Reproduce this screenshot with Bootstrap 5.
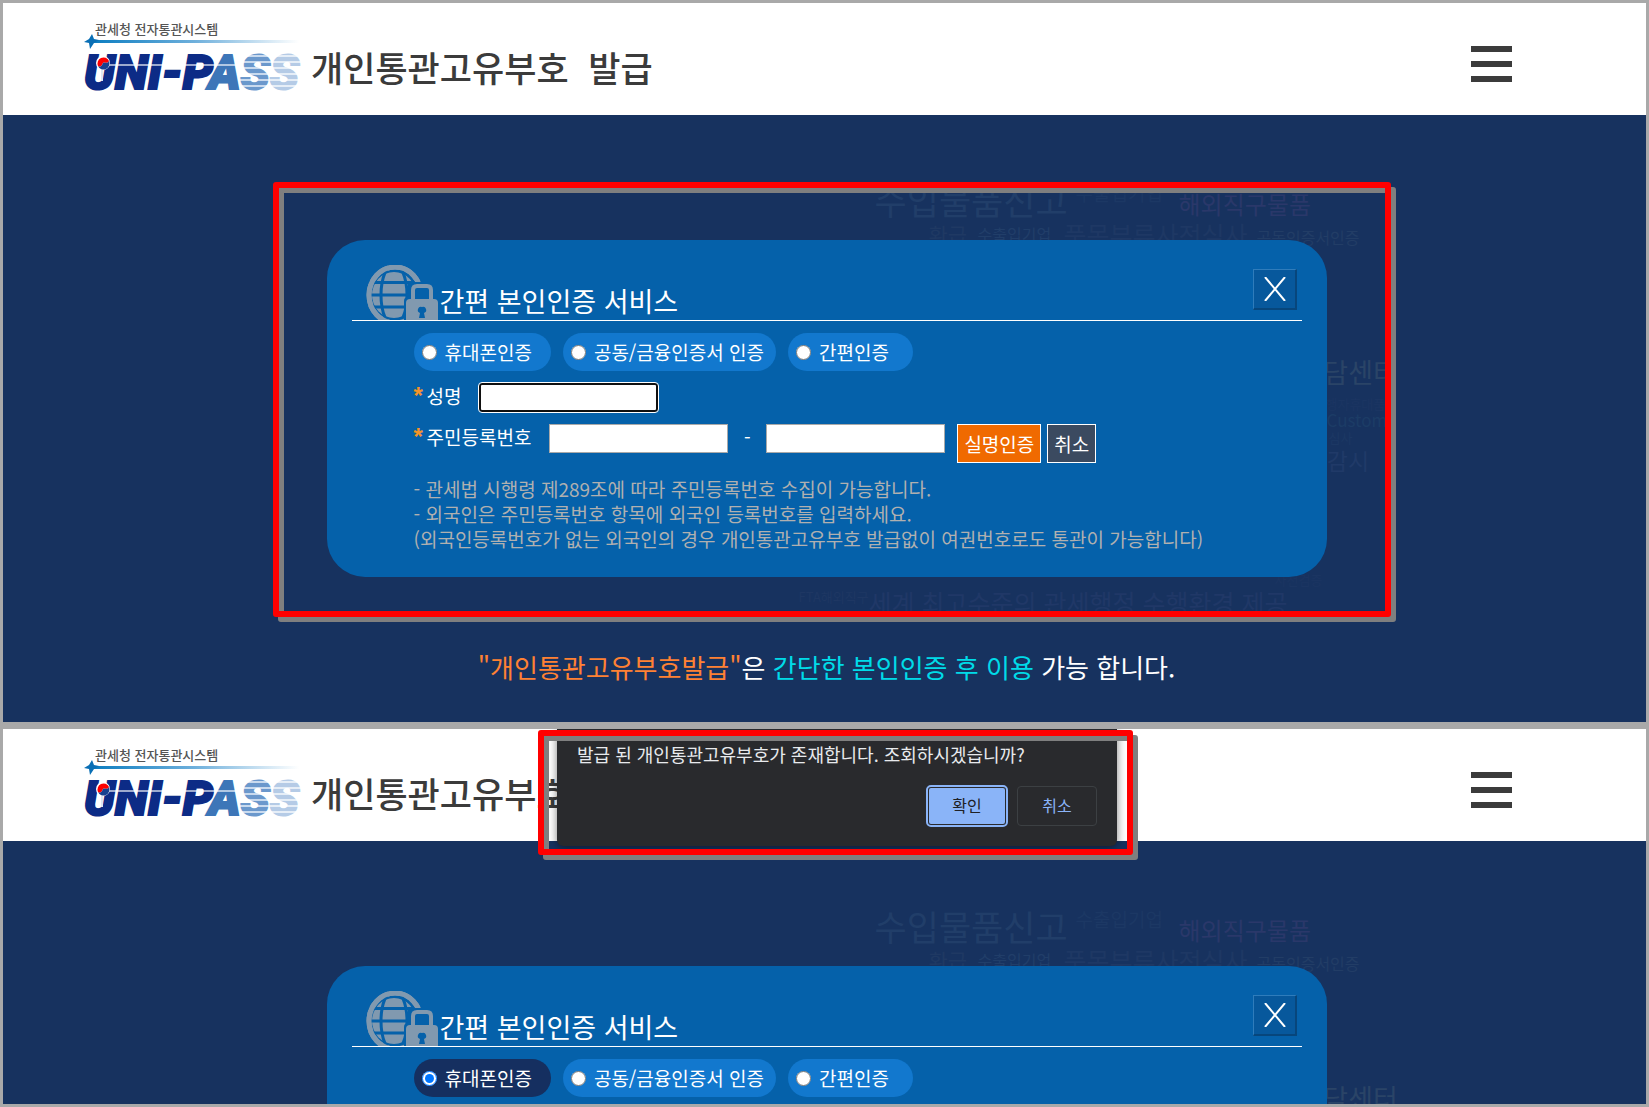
<!DOCTYPE html>
<html lang="ko">
<head>
<meta charset="utf-8">
<meta name="viewport" content="width=device-width, initial-scale=1">
<title>UNI-PASS 개인통관고유부호 발급</title>
<link href="https://cdn.jsdelivr.net/npm/bootstrap@5.3.0/dist/css/bootstrap.min.css" rel="stylesheet">
<style>
  body { background: #a9a9a9; padding: 3px; gap: 7px; font-family: "Noto Sans CJK KR", sans-serif; font-size: 19px; line-height: 25px; overflow: hidden; }
  .shot { background: #17325f; }
  .site-head { height: 112px; background: #fff; padding-left: 80px; padding-right: 134px; }
  .brand { gap: 10px; color: #3b3b3b; text-decoration: none; }
  .brand-title { font-size: 35px; line-height: 44px; font-weight: 500; padding-top: 16px; }
  .burger { width: 41px; height: 36px; margin-top: 9px; }
  .burger i { height: 6px; background: #3b3b3b; }
  .stage { padding: 125px 0 0 4px; }
  .hub { max-width: 1000px; }
  .auth-panel { background: #0561aa; border-radius: 38px; padding: 25px 25px 24px; color: #fff; }
  .auth-head { height: 56px; border-bottom: 1px solid #fff; padding-left: 14px; gap: 1px; }
  .auth-title { font-size: 27px; line-height: 40px; }
  .lock-icon { width: 73px; height: 55px; }
  .close-btn { width: 44px; height: 41px; margin: 4px 5px 0 0; padding-left: 2px; background: #07589c; border: 1px solid; border-color: #2f7cbb #07467c #07467c #2f7cbb; border-width: 1px 2px 2px 1px; }
  .auth-body { padding-left: 62px; }
  .pills { gap: 12px; margin-top: 12px; }
  .pill { height: 38px; border-radius: 19px; background: #1278ce; padding: 0 12px 2px 8px; gap: 8px; }
  .pill.wide { min-width: 125px; padding-right: 19px; }
  .pill.on { background: #152f60; }
  .pill input { width: 15px; height: 15px; margin: 2px 0 0; }
  .field-row { margin-top: 12px; }
  .field-label { color: #fff; margin-right: 18px; }
  .req { color: #f59428; width: 13px; display: inline-block; font-family: "Liberation Sans", sans-serif; font-size: 24px; font-weight: 700; line-height: 20px; vertical-align: top; padding-top: 3px; }
  .field-box { width: 179px; height: 29px; background: #fff; border: 1px solid #a9a9a9; padding: 0 6px; border-radius: 0; }
  .field-box.lit { border: 2px solid #101010; border-radius: 3px; outline: 1px solid #fff; }
  .dash { width: 38px; text-align: center; }
  .act { height: 39px; padding: 0 6px; border: 1px solid #fff; color: #fff; line-height: 35px; }
  .act-go { background: #f06a00; margin: 0 6px 0 12px; }
  .act-no { background: #3b4a60; }
  .notes { margin-top: 13px; padding-bottom: 2px; color: #b0b0b0; }
  .tagline { font-size: 26px; line-height: 36px; margin-top: 72px; padding-bottom: 37px; color: #fff; }
  .t-orange { color: #ff8133; }
  .t-cyan { color: #00dbe8; }
  .mark-box { position: absolute; border: 6px solid #f00; border-radius: 3px; filter: drop-shadow(5px 5px 0 #7f7f7f); pointer-events: none; }
  .mark-form { left: -54px; right: -64px; top: -58px; bottom: -40px; }
  .mark-alert { left: 535px; width: 595px; top: 1px; height: 125px; z-index: 6; }
  .cloud span { position: absolute; white-space: nowrap; line-height: 1; }
  .w-declare { left: 548px; top: -58px; font-size: 35px; color: #213e69; }
  .w-trade { left: 749px; top: -57px; font-size: 19px; color: #1c3864; }
  .w-direct { left: 852px; top: -48px; font-size: 24px; color: #2a386a; }
  .w-refund { left: 602px; top: -16px; font-size: 21px; color: #1f3963; }
  .w-firm { left: 651px; top: -14px; font-size: 16px; color: #213e69; }
  .w-class { left: 737px; top: -18px; font-size: 25px; color: #1e3864; }
  .w-cert { left: 930px; top: -11px; font-size: 16px; color: #223d66; }
  .w-center { left: 972px; top: 118px; font-size: 27px; color: #2a4467; }
  .w-goods { left: 987px; top: 157px; font-size: 13px; color: #1b3562; }
  .w-customs { left: 1000px; top: 171px; font-size: 17px; color: #1c3c66; }
  .w-judge { left: 1002px; top: 191px; font-size: 13px; color: #1c3864; }
  .w-watch { left: 958px; top: 209px; font-size: 23px; color: #203a68; }
  .w-verify { left: 948px; top: 333px; font-size: 13px; color: #1b3562; }
  .w-fta { left: 472px; top: 350px; font-size: 13px; color: #1e3763; }
  .w-world { left: 542px; top: 350px; font-size: 25px; color: #203867; }
  .alert-dlg { position: absolute; z-index: 5; left: 554px; top: 0; width: 560px; height: 117px; background: #292a2d; border-radius: 0 0 6px 6px; padding: 12px 20px 20px; box-shadow: 0 1px 8px rgba(0,0,0,.5); }
  .alert-msg { color: #e8eaed; font-size: 18px; line-height: 26px; }
  .dlg-acts { gap: 10px; }
  .dlg-btn { width: 80px; height: 40px; border-radius: 4px; font-size: 16px; line-height: 24px; padding-bottom: 3px; border: 1px solid #3c4043; background: transparent; color: #8ab4f8; }
  .dlg-btn.prime { background: #8ab4f8; color: #202124; border: 2px solid #292a2d; outline: 2px solid #8ab4f8; outline-offset: -1px; }
</style>
<script src="https://cdn.jsdelivr.net/npm/bootstrap@5.3.0/dist/js/bootstrap.bundle.min.js"></script>
</head>
<body class="d-flex flex-column vh-100">

<svg width="0" height="0" class="position-absolute" aria-hidden="true">
  <defs>
    <linearGradient id="swoosh" x1="0" x2="1"><stop offset="0" stop-color="#0a7cc0"/><stop offset=".5" stop-color="#6fb0dc"/><stop offset="1" stop-color="#fff"/></linearGradient>
    <pattern id="bandA" width="10" height="6" patternUnits="userSpaceOnUse"><rect width="10" height="4" fill="#6b98cc"/><rect y="4" width="10" height="2" fill="#c9daee"/></pattern>
    <pattern id="bandB" width="10" height="6" patternUnits="userSpaceOnUse"><rect width="10" height="4" fill="#b5cbe6"/><rect y="4" width="10" height="2" fill="#e6eef7"/></pattern>
    <clipPath id="globeCut"><path d="M0 0H73V17H42V55H0z"/></clipPath>
    <symbol id="logo" viewBox="0 0 218 76">
      <text x="12" y="13" font-family="Noto Sans CJK KR, sans-serif" font-size="13" font-weight="500" fill="#555">관세청 전자통관시스템</text>
      <rect x="8" y="19" width="208" height="3" fill="url(#swoosh)"/>
      <path d="M9 13l2 5 5 1-5 3-4 6-1-6-5-1 5-3z" fill="#0a6fb5"/>
      <text x="1" y="68" font-family="Roboto, Liberation Sans, sans-serif" font-size="48" font-weight="900" font-style="italic" stroke-width="2"><tspan fill="#0c2b86" stroke="#0c2b86">UNI-P</tspan><tspan fill="#3d76b8" stroke="#3d76b8">A</tspan><tspan fill="url(#bandA)" stroke="url(#bandA)">S</tspan><tspan fill="url(#bandB)" stroke="url(#bandB)">S</tspan></text>
      <rect x="14" y="43" width="140" height="2" fill="#fff" opacity=".6"/>
      <path d="M19 48v12" stroke="#dfe6f3" stroke-width="2"/>
      <circle cx="20" cy="42" r="7" fill="#fff"/>
      <path d="M15 45a6 6 0 0 1 11-5c-2 4-5 0-6 2s-2 5-5 3z" fill="#f00"/>
      <path d="M15 45a6 6 0 0 0 11-5c-2 4-5 0-6 2s-2 5-5 3z" fill="#17408f"/>
    </symbol>
    <symbol id="globelock" viewBox="0 0 73 55">
      <g clip-path="url(#globeCut)">
        <ellipse cx="29" cy="30" rx="26" ry="28" fill="none" stroke="#8199af" stroke-width="5"/>
        <ellipse cx="28" cy="30" rx="22" ry="23" fill="#8199af"/>
        <ellipse cx="28" cy="30" rx="13" ry="31" fill="none" stroke="#0561aa" stroke-width="3"/>
        <path d="M0 17.5H60M5 30H60M5 42H60" stroke="#0561aa" stroke-width="3"/>
        <ellipse cx="29" cy="30" rx="26" ry="28" fill="none" stroke="#8199af" stroke-width="5"/>
      </g>
      <path d="M38 55V36q0-4 4-4V22h20v33z" fill="#0561aa"/>
      <path d="M47 36V25q0-4 4-4h10q4 0 4 4v11" fill="none" stroke="#8199af" stroke-width="4"/>
      <path d="M40 55V38q0-4 4-4h24q4 0 4 4v17z" fill="#8199af"/>
      <path d="M56 42a3 3 0 0 1 2 6l1 5h-6l1-5a3 3 0 0 1 2-6z" fill="#0561aa"/>
    </symbol>
  </defs>
</svg>

<section class="shot position-relative">
  <header class="site-head d-flex align-items-center justify-content-between">
    <a class="brand d-flex align-items-center" href="#">
      <svg width="218" height="76" role="img" aria-label="UNI-PASS"><use href="#logo"/></svg>
      <span class="brand-title">개인통관고유부호&nbsp; 발급</span>
    </a>
    <button class="burger btn border-0 rounded-0 p-0 d-flex flex-column justify-content-between align-items-stretch" type="button" aria-label="메뉴"><i></i><i></i><i></i></button>
  </header>
  <main class="stage">
    <div class="hub position-relative mx-auto">
      <div class="cloud" aria-hidden="true">
        <span class="w-declare">수입물품신고</span>
        <span class="w-trade">수출입기업</span>
        <span class="w-direct">해외직구물품</span>
        <span class="w-refund">환급</span>
        <span class="w-firm">수출입기업</span>
        <span class="w-class">품목부류사전심사</span>
        <span class="w-cert">공동인증서인증</span>
        <span class="w-center">상담센터</span>
        <span class="w-goods">여행자휴대품</span>
        <span class="w-customs">Customs</span>
        <span class="w-judge">심사</span>
        <span class="w-watch">보안감시</span>
        <span class="w-verify">사전검증</span>
        <span class="w-fta">FTA해외직구</span>
        <span class="w-world">세계 최고수준의 관세행정 수행환경 제공</span>
      </div>
      <form class="auth-panel position-relative">
        <div class="auth-head d-flex align-items-start">
          <svg class="lock-icon" aria-hidden="true"><use href="#globelock"/></svg>
          <h1 class="auth-title fw-normal mb-0 mt-3 flex-grow-1">간편 본인인증 서비스</h1>
          <button class="close-btn py-0 pe-0 d-flex align-items-center justify-content-center" type="button" aria-label="닫기"><svg width="22" height="24" viewBox="0 0 22 24"><path d="M1 0l20 24M21 0L1 24" stroke="#fff" stroke-width="2"/></svg></button>
        </div>
        <div class="auth-body">
          <div class="pills d-flex">
            <label class="pill wide d-flex align-items-center"><input type="radio" name="way1">휴대폰인증</label>
            <label class="pill d-flex align-items-center"><input type="radio" name="way1">공동/금융인증서 인증</label>
            <label class="pill wide d-flex align-items-center"><input type="radio" name="way1">간편인증</label>
          </div>
          <div class="field-row d-flex align-items-start">
            <label class="field-label" for="nm"><span class="req">*</span>성명</label>
            <input class="field-box lit" id="nm" type="text">
          </div>
          <div class="field-row d-flex align-items-start">
            <label class="field-label" for="rrn"><span class="req">*</span>주민등록번호</label>
            <input class="field-box" id="rrn" type="text">
            <span class="dash">-</span>
            <input class="field-box" type="text" aria-label="주민등록번호 뒷자리">
            <button class="act act-go" type="button">실명인증</button>
            <button class="act act-no" type="button">취소</button>
          </div>
          <p class="notes mb-0">- 관세법 시행령 제289조에 따라 주민등록번호 수집이 가능합니다.<br>- 외국인은 주민등록번호 항목에 외국인 등록번호를 입력하세요.<br>(외국인등록번호가 없는 외국인의 경우 개인통관고유부호 발급없이 여권번호로도 통관이 가능합니다)</p>
        </div>
      </form>
      <div class="mark-box mark-form"></div>
    </div>
    <p class="tagline text-center mb-0"><span class="t-orange">"개인통관고유부호발급"</span>은 <span class="t-cyan">간단한 본인인증 후 이용</span> 가능 합니다.</p>
  </main>
</section>

<section class="shot position-relative flex-fill overflow-hidden">
  <header class="site-head d-flex align-items-center justify-content-between">
    <a class="brand d-flex align-items-center" href="#">
      <svg width="218" height="76" role="img" aria-label="UNI-PASS"><use href="#logo"/></svg>
      <span class="brand-title">개인통관고유부호</span>
    </a>
    <button class="burger btn border-0 rounded-0 p-0 d-flex flex-column justify-content-between align-items-stretch" type="button" aria-label="메뉴"><i></i><i></i><i></i></button>
  </header>
  <div class="alert-dlg d-flex flex-column justify-content-between" role="dialog" aria-label="확인 창">
    <div class="alert-msg">발급 된 개인통관고유부호가 존재합니다. 조회하시겠습니까?</div>
    <div class="dlg-acts d-flex justify-content-end">
      <button class="dlg-btn prime" type="button">확인</button>
      <button class="dlg-btn" type="button">취소</button>
    </div>
  </div>
  <div class="mark-box mark-alert"></div>
  <div class="stage">
    <div class="hub position-relative mx-auto">
      <div class="cloud" aria-hidden="true">
        <span class="w-declare">수입물품신고</span>
        <span class="w-trade">수출입기업</span>
        <span class="w-direct">해외직구물품</span>
        <span class="w-refund">환급</span>
        <span class="w-firm">수출입기업</span>
        <span class="w-class">품목부류사전심사</span>
        <span class="w-cert">공동인증서인증</span>
        <span class="w-center">상담센터</span>
      </div>
      <form class="auth-panel position-relative pb-5">
        <div class="auth-head d-flex align-items-start">
          <svg class="lock-icon" aria-hidden="true"><use href="#globelock"/></svg>
          <h2 class="auth-title fw-normal mb-0 mt-3 flex-grow-1">간편 본인인증 서비스</h2>
          <button class="close-btn py-0 pe-0 d-flex align-items-center justify-content-center" type="button" aria-label="닫기"><svg width="22" height="24" viewBox="0 0 22 24"><path d="M1 0l20 24M21 0L1 24" stroke="#fff" stroke-width="2"/></svg></button>
        </div>
        <div class="auth-body">
          <div class="pills d-flex">
            <label class="pill wide on d-flex align-items-center"><input type="radio" name="way2" checked>휴대폰인증</label>
            <label class="pill d-flex align-items-center"><input type="radio" name="way2">공동/금융인증서 인증</label>
            <label class="pill wide d-flex align-items-center"><input type="radio" name="way2">간편인증</label>
          </div>
        </div>
      </form>
    </div>
  </div>
</section>
</body>
</html>
